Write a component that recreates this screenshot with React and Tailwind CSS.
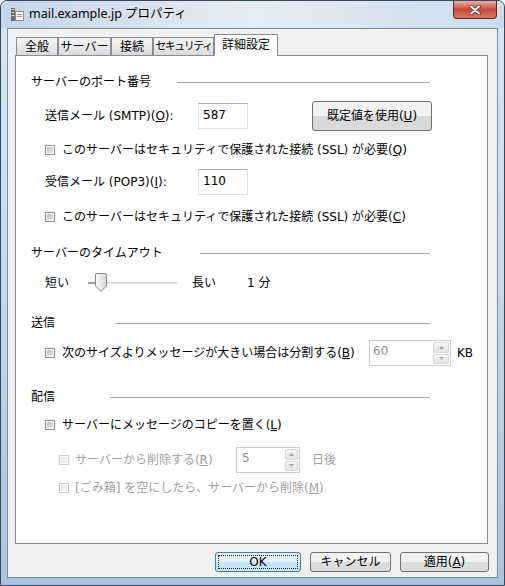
import React from "react";

const Check = ({ disabled }) => (
  <span
    className={
      disabled
        ? "inline-block shrink-0 w-[10px] h-[10px] border border-[#c8c8c8] bg-white p-[1px]"
        : "inline-block shrink-0 w-[10px] h-[10px] border border-[#8e8f8f] bg-white p-[1px]"
    }
  >
    <span
      className={
        disabled
          ? "block w-full h-full bg-gradient-to-br from-[#e6e6e6] to-[#f7f7f7]"
          : "block w-full h-full bg-gradient-to-br from-[#bdbdbd] to-[#eeeeee]"
      }
    />
  </span>
);

const U = ({ children }) => <span className="underline">{children}</span>;

const Header = ({ text, w, lw }) => (
  <div className="flex items-center h-[20px] pl-[15px]">
    <span style={{ width: w }} className="shrink-0 leading-[20px] whitespace-nowrap">
      {text}
    </span>
    <div style={{ width: lw }} className="h-px bg-[#a8a8a8]" />
  </div>
);

const Arrow = ({ up }) => (
  <svg width="5" height="3" viewBox="0 0 5 3">
    {up ? (
      <path d="M0 3 L2.5 0 L5 3 Z" fill="#a8a8a8" />
    ) : (
      <path d="M0 0 L2.5 3 L5 0 Z" fill="#a8a8a8" />
    )}
  </svg>
);

const Spin = ({ value, w, bw, pl }) => (
  <div
    style={{ width: w }}
    className="flex h-[26px] border border-[#c9ccd2] bg-white shrink-0"
  >
    <span
      style={{ paddingLeft: pl }}
      className="flex-1 text-[#8d8d8d] leading-[18px] pt-[1px]"
    >
      {value}
    </span>
    <div style={{ width: bw }} className="flex flex-col py-[1px] pr-[1px] gap-[1px]">
      <div className="flex-1 flex items-center justify-center border border-[#d6d6d6] bg-gradient-to-b from-[#f6f6f6] to-[#e4e4e4] rounded-[2px]">
        <Arrow up />
      </div>
      <div className="flex-1 flex items-center justify-center border border-[#d6d6d6] bg-gradient-to-b from-[#f6f6f6] to-[#e4e4e4] rounded-[2px]">
        <Arrow />
      </div>
    </div>
  </div>
);

const TextBox = ({ value }) => (
  <div className="w-[50px] h-[26px] shrink-0 border border-[#dbdfe6] border-t-[#abadb3] bg-white pl-[4px] leading-[20px] pt-[1px]">
    {value}
  </div>
);

const Tab = ({ children, w, active, tight }) =>
  active ? (
    <div
      style={{ width: w }}
      className="relative z-10 h-[22px] -mb-px border border-b-0 border-[#898c95] bg-white flex items-start justify-center pt-[2px] leading-[16px] whitespace-nowrap"
    >
      {children}
    </div>
  ) : (
    <div
      style={{ width: w }}
      className={
        tight
          ? "h-[18px] border border-b-0 border-[#898c95] bg-gradient-to-b from-[#f4f4f4] via-[#ebebeb] to-[#d9d9d9] flex items-center justify-center leading-[16px] whitespace-nowrap overflow-hidden text-[11px] tracking-[-1.5px]"
          : "h-[18px] border border-b-0 border-[#898c95] bg-gradient-to-b from-[#f4f4f4] via-[#ebebeb] to-[#d9d9d9] flex items-center justify-center leading-[16px] whitespace-nowrap overflow-hidden"
      }
    >
      {children}
    </div>
  );

export default function App() {
  return (
    <div className="w-[505px] h-[586px] flex flex-col border border-[#34475c] rounded-t-[7px] bg-gradient-to-b from-[#dde7f1] via-[#c7d8ea] to-[#aac3de] text-[12px] text-black font-['DejaVu_Sans','Noto_Sans_CJK_JP',sans-serif] overflow-hidden">
      {/* Title bar */}
      <div className="h-[27px] flex items-start shrink-0 bg-gradient-to-r from-[#c4d6e9] via-[#e6edf4] to-[#cadcee]">
        <div className="flex items-center h-[26px] pl-[9px]">
          <svg width="14" height="15" viewBox="0 0 14 15">
            <rect x="1" y="1" width="4" height="13" fill="#6d6d6d" />
            <rect x="1.5" y="2" width="3" height="1" fill="#cfcfcf" />
            <rect x="1.5" y="5" width="3" height="1" fill="#cfcfcf" />
            <rect x="1.5" y="8" width="3" height="1" fill="#cfcfcf" />
            <rect x="5.5" y="4.5" width="8" height="9" fill="#f4f4f4" stroke="#8a8a8a" />
            <rect x="7" y="7" width="5" height="1" fill="#9a9a9a" />
            <rect x="7" y="9" width="5" height="1" fill="#9a9a9a" />
          </svg>
          <span className="ml-[5px] font-['Noto_Sans','Noto_Sans_CJK_JP',sans-serif] text-[12.5px] text-black leading-[16px]">
            mail.example.jp プロパティ
          </span>
        </div>
        <div className="ml-auto mr-[7px] w-[44px] h-[18px] rounded-b-[4px] border border-t-0 border-[#5b2a24] bg-gradient-to-b from-[#eab0a4] via-[#c5483a] to-[#d97a5f] flex items-center justify-center">
          <svg width="12" height="10" viewBox="0 0 12 10">
            <path d="M2 1.5 L10 8.5 M10 1.5 L2 8.5" stroke="#5a2a24" strokeWidth="3.4" strokeLinecap="round" />
            <path d="M2 1.5 L10 8.5 M10 1.5 L2 8.5" stroke="#ffffff" strokeWidth="2" strokeLinecap="round" />
          </svg>
        </div>
      </div>

      {/* Client area */}
      <div className="mx-[6px] h-[550px] shrink-0 border border-[#7b8da1] bg-[#f0f0f0] pt-[5px] pl-[7px]">
        {/* Tabs */}
        <div className="flex items-end h-[21px] pl-[1px]">
          <Tab w={42}>全般</Tab>
          <Tab w={53}>サーバー</Tab>
          <Tab w={42}>接続</Tab>
          <Tab w={61} tight>
            セキュリティ
          </Tab>
          <Tab w={64} active>
            詳細設定
          </Tab>
        </div>

        {/* Panel */}
        <div className="w-[473px] h-[489px] border border-[#898c95] bg-white flex flex-col pt-[16px]">
          <Header text="サーバーのポート番号" w={146} lw={253} />

          <div className="flex items-center h-[20px] pl-[29px] mt-[14px]">
            <span className="w-[153px] shrink-0">
              送信メール (SMTP)(<U>O</U>):
            </span>
            <TextBox value="587" />
            <div className="ml-[64px] w-[120px] h-[30px] shrink-0 rounded-[3px] border border-[#707070] bg-gradient-to-b from-[#f2f2f2] from-50% to-[#dadada] to-50% flex items-center justify-center">
              <span>
                既定値を使用(<U>U</U>)
              </span>
            </div>
          </div>

          <div className="flex items-center h-[20px] pl-[29px] mt-[14px]">
            <Check />
            <span className="ml-[7px]">
              このサーバーはセキュリティで保護された接続 (SSL) が必要(<U>Q</U>)
            </span>
          </div>

          <div className="flex items-center h-[20px] pl-[29px] mt-[12px]">
            <span className="w-[153px] shrink-0">
              受信メール (POP3)(<U>I</U>):
            </span>
            <TextBox value="110" />
          </div>

          <div className="flex items-center h-[20px] pl-[29px] mt-[15px]">
            <Check />
            <span className="ml-[7px]">
              このサーバーはセキュリティで保護された接続 (SSL) が必要(<U>C</U>)
            </span>
          </div>

          <div className="mt-[16px]">
            <Header text="サーバーのタイムアウト" w={169} lw={230} />
          </div>

          <div className="flex items-center h-[20px] pl-[29px] mt-[10px]">
            <span className="w-[43px] shrink-0">短い</span>
            <div className="relative w-[89px] h-[20px] shrink-0">
              <div className="absolute left-0 right-0 top-[9px] h-[2px] bg-[#e4e4e4] border-t border-[#d0d0d0]" />
              <div className="absolute left-0 w-[8px] top-[9px] h-[2px] bg-[#9a9a9a]" />
              <svg className="absolute left-[7px] top-0" width="12" height="19" viewBox="0 0 12 19">
                <defs>
                  <linearGradient id="thumbg" x1="0" x2="1" y1="0" y2="0">
                    <stop offset="0" stopColor="#fbfbfb" />
                    <stop offset="1" stopColor="#d6d6d6" />
                  </linearGradient>
                </defs>
                <path
                  d="M2 0.5 H10 Q11.5 0.5 11.5 2 V13 L6 18.5 L0.5 13 V2 Q0.5 0.5 2 0.5 Z"
                  fill="url(#thumbg)"
                  stroke="#8b8b8b"
                />
              </svg>
            </div>
            <span className="ml-[15px] w-[55px] shrink-0">長い</span>
            <span>1 分</span>
          </div>

          <div className="mt-[20px]">
            <Header text="送信" w={84} lw={315} />
          </div>

          <div className="flex items-center h-[20px] pl-[29px] mt-[10px]">
            <Check />
            <span className="ml-[7px] w-[307px] shrink-0">
              次のサイズよりメッセージが大きい場合は分割する(<U>B</U>)
            </span>
            <Spin value="60" w={82} bw={17} pl={3} />
            <span className="ml-[6px]">KB</span>
          </div>

          <div className="mt-[24px]">
            <Header text="配信" w={79} lw={320} />
          </div>

          <div className="flex items-center h-[20px] pl-[29px] mt-[8px]">
            <Check />
            <span className="ml-[7px]">
              サーバーにメッセージのコピーを置く(<U>L</U>)
            </span>
          </div>

          <div className="flex items-center h-[20px] pl-[43px] mt-[15px] text-[#a0a0a0]">
            <Check disabled />
            <span className="ml-[6px] w-[161px] shrink-0">
              サーバーから削除する(<U>R</U>)
            </span>
            <Spin value="5" w={64} bw={14} pl={5} />
            <span className="ml-[12px]">日後</span>
          </div>

          <div className="flex items-center h-[20px] pl-[43px] mt-[8px] text-[#a0a0a0]">
            <Check disabled />
            <span className="ml-[6px]">
              [ごみ箱] を空にしたら、サーバーから削除(<U>M</U>)
            </span>
          </div>
        </div>

        {/* Buttons */}
        <div className="w-[474px] flex justify-end mt-[8px]">
          <div className="w-[86px] h-[20px] rounded-[3px] border border-[#3c7fb1] bg-gradient-to-b from-[#e5f4fc] from-50% to-[#c4e5f6] to-50% p-[2px]">
            <div className="w-full h-full border border-dotted border-[#222] flex items-center justify-center leading-[14px]">
              OK
            </div>
          </div>
          <div className="ml-[9px] w-[81px] h-[20px] rounded-[3px] border border-[#707070] bg-gradient-to-b from-[#f2f2f2] from-50% to-[#dcdcdc] to-50% flex items-center justify-center leading-[14px]">
            キャンセル
          </div>
          <div className="ml-[9px] w-[89px] h-[20px] rounded-[3px] border border-[#707070] bg-gradient-to-b from-[#f2f2f2] from-50% to-[#dcdcdc] to-50% flex items-center justify-center leading-[14px]">
            適用(<U>A</U>)
          </div>
        </div>
      </div>
    </div>
  );
}
